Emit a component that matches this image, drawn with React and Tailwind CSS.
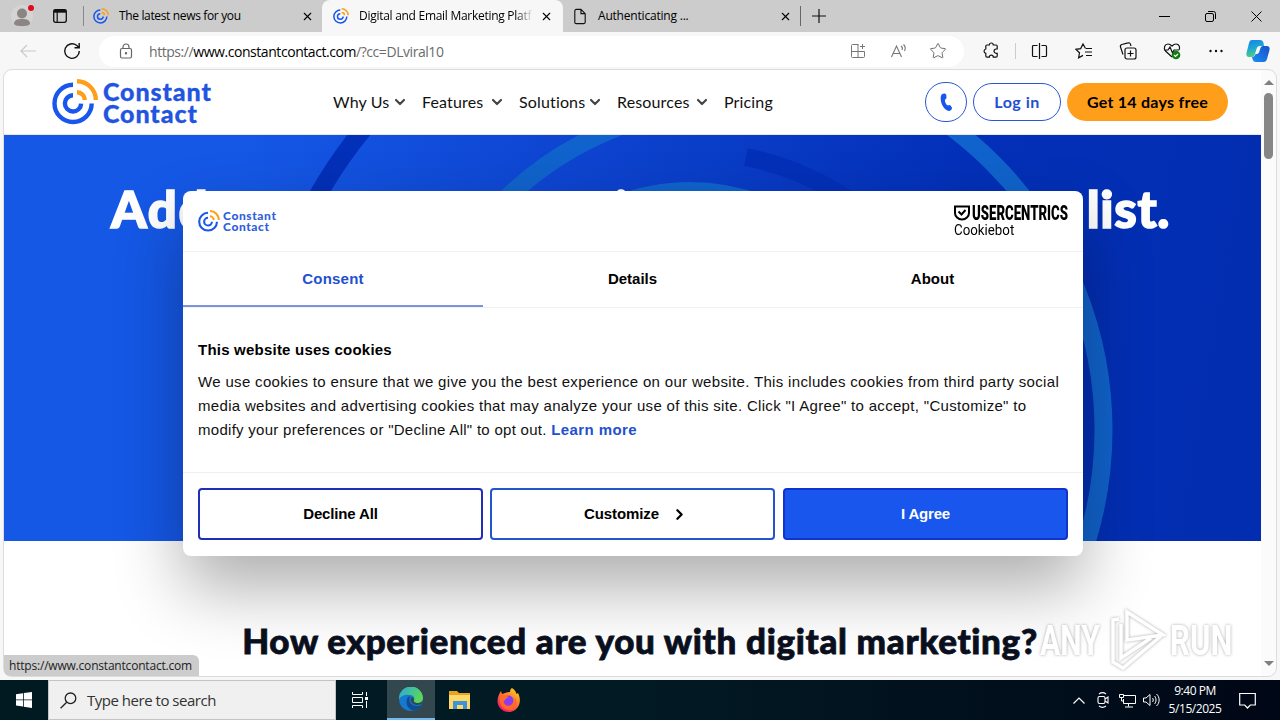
import { ChevronDown, ChevronRight, Star, X } from "lucide-react";

const NAV = [
  { label: "Why Us", width: "w-[89px]", menu: true },
  { label: "Features", width: "w-[97px]", menu: true },
  { label: "Solutions", width: "w-[98px]", menu: true },
  { label: "Resources", width: "w-[107px]", menu: true },
  { label: "Pricing", width: "w-[60px]", menu: false },
];

function Mark({ className }) {
  return (
    <svg viewBox="0 0 46 46" className={className} fill="none">
      <path d="M21 5.8A18.6 18.6 0 1 0 39.7 24.6" stroke="#1856ed" strokeWidth="4.4" />
      <path d="M21 16.3A8.1 8.1 0 1 0 29.1 24.6" stroke="#1856ed" strokeWidth="4.4" />
      <path d="M25 2.2A18.8 18.8 0 0 1 43.8 21" stroke="#ff9e1a" strokeWidth="4.4" />
      <path d="M25 13.2A7.8 7.8 0 0 1 32.8 21" stroke="#ff9e1a" strokeWidth="4.4" />
    </svg>
  );
}

function TabBar() {
  return (
    <div className="flex h-8 items-center bg-[#cccccc] text-[12px] text-black">
      <div className="flex h-full w-[82px] shrink-0 items-center">
        <svg viewBox="0 0 24 24" className="ml-[11px] h-6 w-6">
          <circle cx="11" cy="12" r="11" fill="#d4d4d4" />
          <circle cx="11" cy="9.5" r="5" fill="#8b8583" />
          <path d="M3 20c0-4 3-5 8-5s8 1 8 5c-2 3-14 3-16 0z" fill="#8b8583" />
          <circle cx="20" cy="4" r="3" fill="#e00b1c" />
        </svg>
        <svg viewBox="0 0 16 16" className="ml-[17px] h-4 w-4" fill="none" stroke="#111">
          <rect x="1.7" y="1.7" width="12.6" height="12.6" rx="2" strokeWidth="1.3" />
          <path d="M1.7 3.2h12.6" strokeWidth="3" />
          <path d="M5.2 3v11" strokeWidth="1.2" />
        </svg>
      </div>
      <div className="flex h-full w-[240px] shrink-0 items-center border-l border-[#cccccc]">
        <div className="h-5 w-px bg-[#888]" />
        <Mark className="ml-[9px] h-4 w-4" />
        <span className="ml-[10px] w-[182px] tracking-[-0.35px] whitespace-nowrap">The latest news for you</span>
        <X className="h-[13px] w-[13px]" strokeWidth={2} />
      </div>
      <div className="flex h-full w-[241px] shrink-0 items-center rounded-t-lg bg-[#f7f7f7]">
        <Mark className="ml-[11px] h-4 w-4" />
        <span className="ml-[10px] w-[174px] tracking-[-0.28px] whitespace-nowrap [mask-image:linear-gradient(90deg,#000_90%,transparent)]">
          Digital and Email Marketing Platf
        </span>
        <X className="ml-[7px] h-[13px] w-[13px]" strokeWidth={2} />
      </div>
      <svg viewBox="0 0 14 18" className="ml-[10px] h-[17px] w-[14px]" fill="none" stroke="#111" strokeWidth="1.2">
        <path d="M3 1.5h5l4.5 4.5v9a1.5 1.5 0 0 1-1.5 1.5H3A1.5 1.5 0 0 1 1.5 15V3A1.5 1.5 0 0 1 3 1.5zM8 1.5V6h4.5" />
      </svg>
      <span className="ml-[11px] w-[181px] tracking-[-0.2px]">Authenticating ...</span>
      <X className="h-[13px] w-[13px]" strokeWidth={2} />
      <div className="ml-[8px] h-5 w-px bg-[#666]" />
      <svg viewBox="0 0 14 14" className="ml-[11px] h-[14px] w-[14px]" stroke="#111" strokeWidth="1.2">
        <path d="M7 0v14M0 7h14" />
      </svg>
      <div className="ml-auto mr-[18px] flex items-center gap-[35px]">
        <svg viewBox="0 0 11 11" className="h-[11px] w-[11px]" stroke="#000">
          <path d="M0 5.5h11" />
        </svg>
        <svg viewBox="0 0 11 11" className="h-[11px] w-[11px]" fill="none" stroke="#000">
          <rect x=".5" y="2.5" width="8" height="8" rx="1.5" />
          <path d="M3 .5h5.5a2 2 0 0 1 2 2V8" />
        </svg>
        <svg viewBox="0 0 11 11" className="h-[11px] w-[11px]" stroke="#000">
          <path d="M.5.5l10 10M10.5.5l-10 10" />
        </svg>
      </div>
    </div>
  );
}

function Toolbar() {
  return (
    <div className="flex h-[38px] items-center bg-[#f7f7f7]">
      <svg viewBox="0 0 16 14" className="ml-5 h-[14px] w-4" fill="none" stroke="#c9c9c9" strokeWidth="1.2">
        <path d="M16 7H1M7 1L1 7l6 6" />
      </svg>
      <svg viewBox="0 0 18 18" className="ml-[27px] h-[18px] w-[18px]" fill="none" stroke="#111" strokeWidth="1.4">
        <path d="M16.3 9A7.3 7.3 0 1 1 13.5 3.3L16 5.5M16.2 1v4.7h-4.7" />
      </svg>
      <div className="ml-[18px] flex h-[31px] w-[865px] items-center rounded-full bg-white text-[#6b6b6b]">
        <svg viewBox="0 0 14 16" className="ml-[20px] h-4 w-[14px]" fill="none" stroke="#666" strokeWidth="1.2">
          <rect x="1.5" y="5.5" width="11" height="9.5" rx="1.5" />
          <path d="M4 5.5V4a3 3 0 0 1 6 0v1.5" />
          <circle cx="7" cy="10.2" r=".6" fill="#666" />
        </svg>
        <span className="ml-[16px] w-[701px] text-[14px] tracking-[-0.44px] whitespace-nowrap">
          https://<span className="text-black">www.constantcontact.com</span>/?cc=DLviral10
        </span>
        <svg viewBox="0 0 16 16" className="h-4 w-4" fill="none" stroke="#777">
          <path d="M8.5 1.5h-6a1 1 0 0 0-1 1v11a1 1 0 0 0 1 1h11a1 1 0 0 0 1-1v-5h-13M8 1.5v13M12.5 1v5M10 3.5h5" />
        </svg>
        <svg viewBox="0 0 18 16" className="ml-[24px] h-4 w-[18px]" fill="none" stroke="#777" strokeWidth="1.1">
          <path d="M1.5 14L6.5 3l5 11M3 10.5h7M11 3c1.5 1 1.5 3 1 4M13.5 1.5c2 2 2 4.5 1 6.5" />
        </svg>
        <Star className="ml-[21px] h-[18px] w-[18px]" strokeWidth={1.3} />
      </div>
      <svg viewBox="0 0 18 18" className="ml-[18px] h-[18px] w-[18px]" fill="none" stroke="#111" strokeWidth="1.2">
        <path d="M5 3h2.3a2 2 0 0 1 4 0H14a1.2 1.2 0 0 1 1.2 1.2V7h-1a2 2 0 0 0 0 4.300h1V14a1.2 1.2 0 0 1-1.2 1.2h-2.700a2 2 0 0 0-4 0H5A1.2 1.2 0 0 1 3.800 14v-2.700a2.2 2.2 0 0 1 0-4.300V4.200A1.2 1.2 0 0 1 5 3z" />
      </svg>
      <div className="ml-[15px] h-4 w-px bg-[#ccc]" />
      <div className="flex items-center gap-[27px] pl-[15px]">
        <svg viewBox="0 0 17 16" className="h-4 w-[17px]" fill="none" stroke="#111" strokeWidth="1.2">
          <path d="M6.5 2.5H2.5A1 1 0 0 0 1.5 3.5v9A1 1 0 0 0 2.5 13.5h4M10.5 2.5h4A1 1 0 0 1 15.5 3.5v9a1 1 0 0 1-1 1h-4M8.5 0v16" />
        </svg>
        <svg viewBox="0 0 18 16" className="h-4 w-[18px]" fill="none" stroke="#111" strokeWidth="1.2">
          <path d="M10.5 5.5L8 1 5.7 5.6 1 6.3l3.5 3.5-.9 5L8 12.4M11 5.5h6M10 9h7M11 12.5h6" />
        </svg>
        <svg viewBox="0 0 18 18" className="-ml-px h-[18px] w-[18px]" fill="none" stroke="#111" strokeWidth="1.2">
          <rect x="6" y="6" width="11" height="11" rx="2" />
          <path d="M11.5 8.5v6M8.5 11.5h6M4 12.5L1.5 5a2 2 0 0 1 1.3-2.5L9 .9a2 2 0 0 1 2.5 1.4l.5 1.7" />
        </svg>
        <svg viewBox="0 0 18 18" className="-ml-px h-[18px] w-[18px]" fill="none" stroke="#111" strokeWidth="1.2">
          <path d="M9 15L2.5 9C0 5.5 2 2 5 2c2 0 3 1 4 2 1-1 2-2 4-2 3 0 4.5 3.5 3 6M1 8h4l2-3 2.5 6L11 8h5" />
          <circle cx="13" cy="13" r="4.3" fill="#107c10" stroke="none" />
          <path d="M11 13l1.5 1.5L15 12" stroke="#fff" />
        </svg>
        <svg viewBox="0 0 14 4" className="ml-px h-1 w-[14px]" fill="#111">
          <circle cx="1.5" cy="2" r="1.2" />
          <circle cx="7" cy="2" r="1.2" />
          <circle cx="12.5" cy="2" r="1.2" />
        </svg>
      </div>
      <svg viewBox="0 0 24 24" className="ml-[23px] h-6 w-6 shrink-0">
        <defs>
          <linearGradient id="cpA" x1="0" y1="0" x2="0.3" y2="1">
            <stop offset="0" stopColor="#1a7fe8" />
            <stop offset=".5" stopColor="#1aa5d8" />
            <stop offset="1" stopColor="#4cd07a" />
          </linearGradient>
          <linearGradient id="cpB" x1="0" y1="1" x2="1" y2="0">
            <stop offset="0" stopColor="#1b8df5" />
            <stop offset="1" stopColor="#1650c8" />
          </linearGradient>
        </defs>
        <path d="M6 1h8c2 0 3 1 3.5 3l.5 3h-4c-2 0-3 1-3.5 3L9 15c-.5 2-1.5 3-3.5 3H3c-2 0-3-1.5-2.5-4L3 4c.5-2 1.5-3 3-3z" fill="url(#cpA)" />
        <path d="M18 7h2.5c2.5 0 3.5 1.5 3 4l-2.5 9c-.6 2-1.5 3-3.5 3H10c-2 0-3-1-3.5-3L6 18c2 0 3-1 3.5-3H11c1 0 2-1 2.5-3l1-3c.5-1.5 1.5-2 3.5-2z" fill="url(#cpB)" />
      </svg>
    </div>
  );
}

function SiteHeader() {
  return (
    <div className="flex h-[65px] items-center border-b border-[#e8e8e8] bg-white font-[Lato]">
      <Mark className="ml-[48px] h-[46px] w-[46px]" />
      <div className="ml-[5px] w-[230px] text-[25px] leading-[22px] font-black tracking-[0.9px] text-[#1f55e0] [-webkit-text-stroke:0.3px]">
        Constant
        <br />
        Contact
      </div>
      <div className="flex w-[592px] text-[16px] tracking-[0.15px] text-[#111]">
        {NAV.map((n) => (
          <div key={n.label} className={`flex shrink-0 items-center whitespace-nowrap ${n.width}`}>
            {n.label}
            {n.menu && <ChevronDown className="mr-[14px] ml-auto h-[16px] w-[16px] text-[#444]" strokeWidth={3.2} />}
          </div>
        ))}
      </div>
      <div className="flex h-10 w-[42px] items-center justify-center rounded-full border border-[#2a57d0]">
        <svg viewBox="0 0 12 18" className="h-[19px] w-[13px]" fill="#1856ed">
          <path d="M1.5 1.5C3 0 5.5.3 5.8 2L6 4.5c0 1-1.5 1.2-1.5 2.5 0 1.5 1.2 4 2.3 4.6 1 .5 1.8-.6 2.7 0l1.5 2c.8 1.3-.8 3.6-2.7 3.4C4 16.5.5 10.5.5 5.5c0-1.7.2-3.2 1-4z" />
        </svg>
      </div>
      <div className="ml-[6px] flex h-[38px] w-[88px] items-center justify-center rounded-full border border-[#2a57d0] text-[16px] font-bold tracking-[0.5px] text-[#2250d0]">
        Log in
      </div>
      <div className="ml-[6px] flex h-[38px] w-[161px] items-center justify-center rounded-full bg-[#ff9e1a] text-[16px] font-bold tracking-[0.25px] text-black">
        Get 14 days free
      </div>
    </div>
  );
}

function Hero() {
  return (
    <div className="relative h-[406px] overflow-hidden bg-[linear-gradient(100deg,#1558e6_0%,#1558e6_18%,#0d43cf_45%,#0330b8_73%,#022db0_100%)]">
      <svg viewBox="4 135 1257 406" className="absolute inset-0 h-full w-full" fill="none" strokeWidth="18">
        <path d="M256 430A475 475 0 0 1 731 -45" stroke="#0330b8" />
        <path d="M726 52.5A377.5 377.5 0 0 1 726 807.5" stroke="#1063cc" />
        <path d="M405 437A332 332 0 0 1 737 105" stroke="#1063cc" />
        <path d="M746 157A286 286 0 0 1 976 437" stroke="#0330b8" />
        <circle cx="690" cy="391" r="200" stroke="#1063cc" />
      </svg>
      <div className="relative flex h-[148px] items-center justify-between pr-[91px] pl-[107px] font-[Lato] text-[51px] font-black text-white [-webkit-text-stroke:1.6px]">
        <span className="tracking-[1.6px]">Add</span>
        <span className="mr-[54px]">i</span>
        <span className="tracking-[0.6px]">list.</span>
      </div>
    </div>
  );
}

function CookieDialog() {
  return (
    <div className="absolute top-[191px] left-[183px] flex h-[365px] w-[900px] flex-col rounded-lg bg-white text-[15px] text-[#111] shadow-[0_32px_68px_rgba(0,0,0,0.32)] font-['Liberation_Sans']">
      <div className="flex h-[61px] items-center justify-between border-b border-[#f0f0f0] px-[15px]">
        <div className="flex items-center font-[Lato] text-[12px] leading-[11px] font-black tracking-[0.6px] text-[#3060dd]">
          <Mark className="mr-[3px] h-[22px] w-[22px]" />
          <div>
            Constant
            <br />
            Contact
          </div>
        </div>
        <div className="w-[114px] font-[Roboto] text-black">
          <div className="flex h-[18px] items-center">
            <svg viewBox="0 0 16 16" className="h-4 w-4 shrink-0" fill="none" stroke="#000" strokeWidth="2">
              <path d="M1 1.5h14V8a7 6.5 0 0 1-14 0z" />
              <path d="M4.5 6.5l3 3 4-4.5" />
            </svg>
            <div className="h-[20px] w-0">
              <div className="ml-[2px] w-[145px] origin-left scale-x-[0.66] text-[20px] leading-[20px] font-black">USERCENTRICS</div>
            </div>
          </div>
          <div className="w-[100px] origin-left scale-x-[0.95] text-[14px] leading-[17px]">Cookiebot</div>
        </div>
      </div>
      <div className="flex h-[56px] border-b border-[#f0f0f0] text-center leading-[54px] font-bold text-black">
        <div className="h-[55px] w-[300px] border-b-2 border-[#7d93e0] tracking-[0.2px] text-[#2250d0]">Consent</div>
        <div className="w-[299px]">Details</div>
        <div className="w-[301px]">About</div>
      </div>
      <div className="h-[164px] px-[15px] pt-[32px]">
        <div className="mb-[10px] leading-[20px] font-bold tracking-[0.22px] text-black">This website uses cookies</div>
        <div className="leading-[24px] whitespace-nowrap">
          <div className="tracking-[0.335px]">
            We use cookies to ensure that we give you the best experience on our website. This includes cookies from third party social
          </div>
          <div className="tracking-[0.32px]">
            media websites and advertising cookies that may analyze your use of this site. Click "I Agree" to accept, "Customize" to
          </div>
          <div className="tracking-[0.28px]">
            modify your preferences or "Decline All" to opt out.{" "}
            <span className="font-bold tracking-[0.42px] text-[#2250d0]">Learn more</span>
          </div>
        </div>
      </div>
      <div className="flex gap-[7px] border-t border-[#f0f0f0] px-[15px] pt-[15px] font-bold text-black">
        <div className="flex h-[52px] w-[285px] items-center justify-center rounded border-2 border-[#1f2fb8] tracking-[-0.15px]">Decline All</div>
        <div className="flex h-[52px] w-[285px] items-center justify-center rounded border-2 border-[#2256cc] tracking-[-0.1px]">
          Customize
          <ChevronRight className="-mr-[7px] ml-[12px] h-[17px] w-[17px]" strokeWidth={3.2} />
        </div>
        <div className="ml-px flex h-[52px] w-[285px] items-center justify-center rounded border-2 border-[#1233cc] bg-[#1856ed] tracking-[-0.2px] text-white">I Agree</div>
      </div>
    </div>
  );
}

function Watermark() {
  return (
    <div className="absolute top-[608px] left-[1040px] flex h-16 items-center font-[Roboto] text-[42px] font-bold text-white [filter:drop-shadow(0_0_1.5px_#aaa)]">
      <div className="w-[64px]">
        <div className="w-[64px] origin-left scale-x-[0.72]">ANY</div>
      </div>
      <svg viewBox="0 0 60 64" className="h-16 w-[62px]" fill="none" stroke="#fff" strokeWidth="3.5">
        <path d="M22 4v28L58 27zM14 11L8 12v42l10 6 38-32M16 16v34l30-20" />
      </svg>
      <div className="w-[66px] pl-1">
        <div className="w-[100px] origin-left scale-x-[0.74]">RUN</div>
      </div>
    </div>
  );
}

function Taskbar() {
  return (
    <div className="flex h-10 bg-[linear-gradient(90deg,#011921,#021a24_50%,#000716)] text-white">
      <div className="flex w-[48px] items-center justify-center">
        <svg viewBox="0 0 16 16" className="h-4 w-4" fill="#fff">
          <path d="M0 2.2l7-1v6.3H0zM7.8 1.1L16 0v7.5H7.8zM0 8.3h7v6.3l-7-1zM7.8 8.3H16V16l-8.2-1.2z" />
        </svg>
      </div>
      <div className="flex w-[288px] items-center border border-[#c4c4c4] bg-[#f0f0f0] text-[15px] tracking-[-0.48px] text-[#333]">
        <svg viewBox="0 0 17 17" className="ml-[11px] h-[17px] w-[17px]" fill="none" stroke="#222" strokeWidth="1.3">
          <circle cx="10.5" cy="6.3" r="5.3" />
          <path d="M6.7 10.2L.6 16.3" />
        </svg>
        <span className="ml-[10px]">Type here to search</span>
      </div>
      <div className="flex w-[51px] items-center justify-center">
        <svg viewBox="0 0 16 16" className="-ml-[3px] h-4 w-4" fill="none" stroke="#fff">
          <path d="M.5 0v2.5h10V0M.5 16v-2.5h10V16M.5 5.5h10v5h-10zM14.5 0v4M14.5 9v7" />
          <path d="M13 5h3v3h-3z" fill="#fff" stroke="none" />
        </svg>
      </div>
      <div className="flex w-[48px] items-center justify-center border-b-2 border-[#76b9ed] bg-[#33474e]">
        <svg viewBox="0 0 24 24" className="h-6 w-6">
          <defs>
            <linearGradient id="edgeTop" x1="0" y1="0" x2="1" y2=".4">
              <stop offset="0" stopColor="#2aa8dd" />
              <stop offset="1" stopColor="#5bd65a" />
            </linearGradient>
          </defs>
          <circle cx="12" cy="12" r="12" fill="#1479cf" />
          <path d="M0 12a12 12 0 0 1 24-1c0 3-2 5-5 5-3 0-5-1-4-3 1-3-1-5-4-5C6 7 2 9 0 12z" fill="url(#edgeTop)" />
          <path d="M9 10c-3 4-2 11 5 13.8 4-.6 7-3 8.500-5.800-4 2-9 1-11-2-1.500-2-1.500-5 0-6.500-1-.3-2 0-2.500.5z" fill="#134a94" />
          <path d="M12 11c-1.2 3 1 6.800 6 7 2.500 0 4-.5 5-1.200l1-3.800c-1 2-3 3-5 3-3 0-5-1-4-3 .5-1-1.500-3.500-3-2z" fill="#33474e" />
        </svg>
      </div>
      <div className="flex w-[49px] items-center justify-center">
        <svg viewBox="0 0 22 20" className="h-5 w-[22px]">
          <path d="M0 1h8l2 2h11v16H0z" fill="#e8a320" />
          <path d="M0 5h21v14H0z" fill="#ffd768" />
          <path d="M4 19v-8h14v8h-4v-4H8v4z" fill="#3d93d8" />
        </svg>
      </div>
      <div className="flex w-[49px] items-center justify-center">
        <svg viewBox="0 0 24 24" className="h-6 w-6">
          <defs>
            <linearGradient id="fox" x1="1" y1="0" x2=".3" y2="1">
              <stop offset="0" stopColor="#ffe226" />
              <stop offset=".5" stopColor="#ff7a2a" />
              <stop offset="1" stopColor="#f5156c" />
            </linearGradient>
          </defs>
          <path d="M15 0c3 2 4 4 4.500 6l1.500-1c2 4 2.500 8 1 12-2 4.500-6 7-10 7C5 24 .5 19 .5 13 .5 9 2 6 4 3l1 3 3-1c2-1 4-1 5-1 0-1.500.5-3 2-4z" fill="url(#fox)" />
          <circle cx="11.5" cy="12.5" r="5" fill="#8a3df0" />
          <path d="M3 9c3-2 6-1 9 0-3 1-3 2-5 4s2 6 6 5 6-4 4-9c5 5 2 13-5 13S2 16 3 9z" fill="#ff6a2c" />
        </svg>
      </div>
      <div className="ml-auto flex items-center">
        <svg viewBox="0 0 12 7" className="mr-[12px] h-[7px] w-3" fill="none" stroke="#fff" strokeWidth="1.2">
          <path d="M.5 6.5L6 1l5.5 5.5" />
        </svg>
        <svg viewBox="0 0 12 16" className="mr-[10px] h-4 w-3" fill="none" stroke="#fff" strokeWidth="1.1">
          <rect x="1" y="4.5" width="7" height="7" rx="1.5" />
          <path d="M8 7l3-2v6L8 9M2 2c2-1.500 5-1.500 7 0M2 14c2 1.500 5 1.500 7 0" />
        </svg>
        <svg viewBox="0 0 17 15" className="mr-[7px] h-[15px] w-[17px]" fill="none" stroke="#fff">
          <path d="M5 2.5h11.5v8H4.5V6M9.5 10.5v3M6 14h8M.5 1.5h4v3h-4zM2.5 5v3h2" />
        </svg>
        <svg viewBox="0 0 17 14" className="mr-[8px] h-[14px] w-[17px]" fill="none" stroke="#fff">
          <path d="M.5 5v4h2.5l4 3.5v-11L3 5zM9.5 5c1 1 1 3 0 4M11.5 3c2 2 2 6 0 8M13.5 1c3.500 3 3.500 9 0 12" />
        </svg>
        <div className="w-[54px] text-center text-[12px] leading-[18px] tracking-[-0.45px] whitespace-nowrap">
          9:40 PM
          <br />
          5/15/2025
        </div>
        <svg viewBox="0 0 17 17" className="mr-[24px] ml-[17px] h-[17px] w-[17px]" fill="none" stroke="#fff" strokeWidth="1.2">
          <path d="M.7 1.5h15.6v11.5h-5L8.5 16l-2.8-3h-5z" />
        </svg>
      </div>
    </div>
  );
}

export default function App() {
  return (
    <div className="relative h-[720px] w-[1280px] overflow-hidden bg-[#f7f7f7] font-['Open_Sans',sans-serif]">
      <TabBar />
      <Toolbar />
      <div className="mx-[4px] flex h-[606px] w-[1272px] overflow-hidden rounded-lg bg-white outline outline-[#dcdcdc]">
        <div className="w-[1257px] shrink-0">
          <SiteHeader />
          <Hero />
          <div className="pt-[74px] pl-[15px] text-center font-[Lato] text-[35px] leading-[50px] font-black tracking-[0.68px] whitespace-nowrap text-[#0b1020] [-webkit-text-stroke:0.8px]">
            How experienced are you with digital marketing?
          </div>
        </div>
        <div className="flex w-[15px] flex-col items-center bg-[#fbfbfb] pt-[10px]">
          <div className="h-0 w-0 border-x-[5px] border-b-[5px] border-x-transparent border-b-[#808080]" />
          <div className="mt-[8px] h-[66px] w-[9px] rounded-full bg-[#868686]" />
          <div className="mt-auto mb-[10px] h-0 w-0 border-x-[5px] border-t-[5px] border-x-transparent border-t-[#808080]" />
        </div>
      </div>
      <div className="h-[4px]" />
      <CookieDialog />
      <Watermark />
      <div className="absolute top-[655px] left-[4px] h-[21px] w-[195px] rounded-tr-md rounded-bl-md bg-[#cccccc] pl-[5px] text-[12px] leading-[21px] tracking-[-0.2px] whitespace-nowrap text-[#222]">
        https://www.constantcontact.com
      </div>
      <Taskbar />
    </div>
  );
}
